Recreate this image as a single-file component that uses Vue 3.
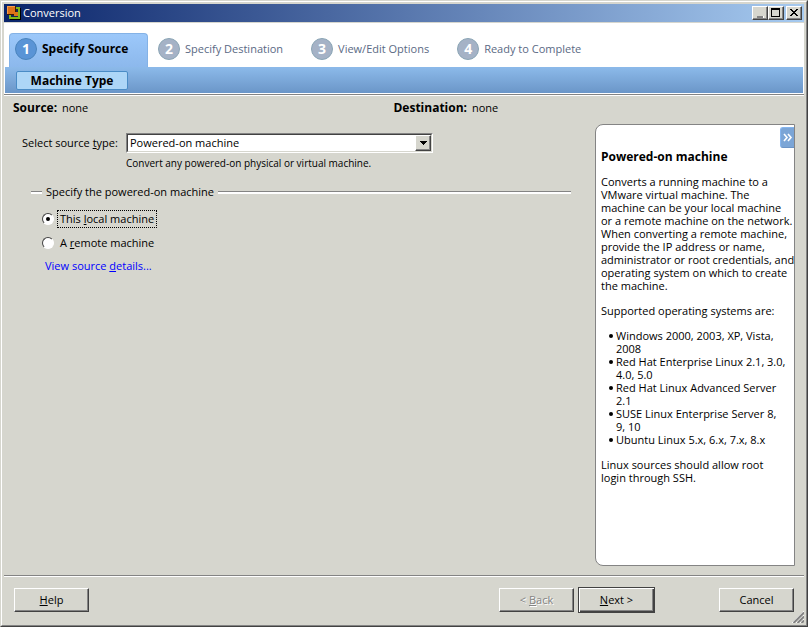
<template>
  <div class="window">
    <div class="window-inner">
      <!-- Title bar -->
      <header class="titlebar">
        <svg class="app-icon" width="16" height="16" viewBox="0 0 16 16" shape-rendering="crispEdges">
          <path d="M3 3h12v12H4v-1H3z" fill="#000" />
          <path d="M3 2h11v12H3zM5 4v8h7V4z" fill="#84b818" fill-rule="evenodd" />
          <rect x="5" y="4" width="7" height="8" fill="#182850" />
          <rect x="1" y="1" width="9" height="9" fill="#421800" />
          <rect x="1" y="1" width="8" height="8" fill="#de7318" />
          <path d="M1 1h8v1H2v7H1z" fill="#f79c4a" />
          <rect x="8" y="7" width="4" height="4" fill="#de7318" />
        </svg>
        <h1 class="title">Conversion</h1>
        <div class="window-buttons">
          <button type="button" class="win-btn" aria-label="Minimize">
            <svg width="12" height="10" viewBox="0 0 12 10" shape-rendering="crispEdges">
              <path d="M3 8h6v2H3z" fill="#848484" />
              <path d="M9 8h1v2H9z" fill="#fff" />
            </svg>
          </button>
          <button type="button" class="win-btn" aria-label="Maximize">
            <svg width="12" height="10" viewBox="0 0 12 10" shape-rendering="crispEdges">
              <path d="M1 0h9v9H1zM2 2v6h7V2z" fill="#000" fill-rule="evenodd" />
            </svg>
          </button>
          <button type="button" class="win-btn close" aria-label="Close">
            <svg width="12" height="10" viewBox="0 0 12 10" shape-rendering="crispEdges">
              <path d="M2 1h2v1h1v1h2v-1h1v-1h2v1h-1v1h-1v1h-1v1h1v1h1v1h1v1h-2v-1h-1v-1h-2v1h-1v1h-2v-1h1v-1h1v-1h1v-1h-1v-1h-1v-1h-1z" fill="#000" />
            </svg>
          </button>
        </div>
      </header>

      <!-- Wizard steps -->
      <nav class="wizard">
        <ol class="steps">
          <li
            v-for="(step, index) in steps"
            :key="step"
            :class="['step', { active: index === currentStep }]"
          >
            <span class="step-number">{{ index + 1 }}</span>
            <span class="step-label">{{ step }}</span>
          </li>
        </ol>
        <div class="substeps">
          <button type="button" class="substep">Machine Type</button>
        </div>
      </nav>

      <section class="summary">
        <div><strong>Source:</strong> none</div>
        <div><strong>Destination:</strong> none</div>
      </section>

      <main class="content">
        <form class="form" @submit.prevent>
          <div class="source-type">
            <label for="source-type">Select source <u>t</u>ype:</label>
            <div class="select-box">
              <select id="source-type" v-model="sourceType">
                <option>Powered-on machine</option>
              </select>
              <span class="select-arrow">
                <svg width="7" height="4" viewBox="0 0 7 4" shape-rendering="crispEdges">
                  <path d="M0 0h7v1H0zM1 1h5v1H1zM2 2h3v1H2zM3 3h1v1H3z" />
                </svg>
              </span>
            </div>
            <p class="hint">Convert any powered-on physical or virtual machine.</p>
          </div>

          <fieldset class="machine">
            <legend>Specify the powered-on machine</legend>
            <div class="options">
              <label class="radio">
                <input v-model="machine" type="radio" name="machine" value="local">
                <span>This <u>l</u>ocal machine</span>
              </label>
              <label class="radio">
                <input v-model="machine" type="radio" name="machine" value="remote">
                <span>A <u>r</u>emote machine</span>
              </label>
              <a href="#" class="details">View source <u>d</u>etails...</a>
            </div>
          </fieldset>
        </form>

        <aside class="help">
          <button type="button" class="collapse" aria-label="Collapse">
            <svg width="10" height="9" viewBox="0 0 10 9">
              <path d="M1 1l3 3.5L1 8M5 1l3 3.5L5 8" fill="none" stroke="#fff" stroke-width="1.6" />
            </svg>
          </button>
          <h2>Powered-on machine</h2>
          <p>
            Converts a running machine to a<br>
            VMware virtual machine. The<br>
            machine can be your local machine<br>
            or a remote machine on the network.<br>
            When converting a remote machine,<br>
            provide the IP address or name,<br>
            administrator or root credentials, and<br>
            operating system on which to create<br>
            the machine.
          </p>
          <p>Supported operating systems are:</p>
          <ul>
            <li v-for="os in systems" :key="os">{{ os }}</li>
          </ul>
          <p>
            Linux sources should allow root<br>
            login through SSH.
          </p>
        </aside>
      </main>

      <!-- Bottom buttons -->
      <footer class="footer">
        <button type="button" class="btn"><u>H</u>elp</button>
        <div class="nav-buttons">
          <button type="button" class="btn" disabled>&lt; <u>B</u>ack</button>
          <button type="button" class="btn default"><u>N</u>ext &gt;</button>
        </div>
        <button type="button" class="btn">Cancel</button>
      </footer>
      <svg class="grip" width="12" height="12" viewBox="0 0 12 12">
        <path d="M0 12L12 0M4 12l8-8M8 12l4-4" stroke="#fff" />
        <path d="M1.5 12L12 1.5M5.5 12L12 5.5M9.5 12L12 9.5" stroke="#848484" stroke-width="2" />
      </svg>
    </div>
  </div>
</template>

<script setup>
import { ref } from 'vue'

const steps = ['Specify Source', 'Specify Destination', 'View/Edit Options', 'Ready to Complete']
const currentStep = ref(0)

const sourceType = ref('Powered-on machine')
const machine = ref('local')

// \u00a0 keeps the last version numbers together
const systems = [
  'Windows 2000, 2003, XP, Vista, 2008',
  'Red Hat Enterprise Linux 2.1, 3.0, 4.0, 5.0',
  'Red Hat Linux Advanced Server 2.1',
  'SUSE Linux Enterprise Server 8, 9,\u00a010',
  'Ubuntu Linux 5.x, 6.x, 7.x, 8.x'
]
</script>

<style>
body {
  background: #d6d6ce;
}
</style>

<style scoped>
* {
  box-sizing: border-box;
}

.window {
  min-height: 100vh;
  display: flex;
  background: #d6d6ce;
  border: 1px solid #d6d6ce;
  border-right-color: #424242;
  border-bottom-color: #424242;
  font: 11px/16px 'Open Sans', 'Liberation Sans', sans-serif;
  color: #000;
}

.window-inner {
  position: relative;
  flex: 1;
  min-width: 0;
  display: flex;
  flex-direction: column;
  border: 1px solid #fff;
  border-right-color: #848484;
  border-bottom-color: #848484;
  padding: 2px;
}

button,
select {
  font: inherit;
  color: inherit;
}

/* Title bar */
.titlebar {
  display: flex;
  align-items: center;
  height: 18px;
  padding: 0 2px;
  background: linear-gradient(90deg, #0a246a, #a6caf0);
  color: #fff;
}

.title {
  flex: 1;
  margin: 0 0 0 1px;
  font-size: 11px;
  font-weight: normal;
}

.window-buttons {
  display: flex;
}

.win-btn {
  display: flex;
  align-items: center;
  justify-content: center;
  width: 16px;
  height: 14px;
  padding: 0;
  background: #d6d6ce;
  border: 1px solid #fff;
  border-right-color: #424242;
  border-bottom-color: #424242;
  box-shadow: inset -1px -1px #848484;
}

.win-btn svg {
  flex: none;
}

.close {
  margin-left: 2px;
}

/* Steps */
.wizard {
  margin-top: 1px;
  padding: 0 1px 1px;
  background: #fff;
  border-bottom: 1px solid #848484;
}

.steps {
  display: flex;
  gap: 28px;
  height: 44px;
  margin: 0;
  padding: 10px 4px 0;
  list-style: none;
}

.step {
  display: flex;
  align-items: center;
  gap: 5px;
  height: 34px;
  padding-bottom: 2px;
  color: #5a6984;
}

.step.active {
  width: 139px;
  margin-right: -18px;
  padding: 0 0 3px 5px;
  background: linear-gradient(#9cc8fa, #8cb8ec);
  border: 1px solid #84b2e6;
  border-bottom: 0;
  border-radius: 4px 4px 0 0;
  color: #000;
  font-size: 12px;
  font-weight: bold;
}

.step-number {
  display: flex;
  align-items: center;
  justify-content: center;
  width: 22px;
  height: 22px;
  border: 1px solid #8aa5b5;
  border-radius: 50%;
  background: #a5b2c6;
  color: #fff;
  font-size: 14px;
  font-weight: bold;
}

.active .step-number {
  background: #5a94d6;
  border-color: #4a84bd;
}

.substeps {
  height: 26px;
  padding: 4px 11px;
  background: linear-gradient(#8cbaea, #6b96c8);
}

.substep {
  display: block;
  width: 112px;
  height: 19px;
  padding: 0;
  background: #add6f7;
  border: 1px solid #4a8cc6;
  border-radius: 2px;
  font-size: 12px;
  font-weight: bold;
  line-height: 16px;
}

/* Source and destination summary */
.summary {
  display: grid;
  grid-template-columns: 38fr 41fr;
  padding: 4px 0 8px 9px;
  border-top: 1px solid #fff;
}

.summary strong {
  margin-right: 2px;
  font-size: 12px;
}

/* Form */
.content {
  flex: 1;
  display: flex;
  gap: 24px;
  padding: 0 9px;
}

.form {
  flex: 1;
  min-width: 0;
  padding: 9px 0 0 9px;
}

.source-type {
  display: grid;
  grid-template-columns: 104px minmax(0, 307px);
  align-items: center;
}

.select-box {
  position: relative;
  border: 1px solid #848484;
  border-right-color: #fff;
  border-bottom-color: #fff;
}

.select-box select {
  display: block;
  width: 100%;
  height: 18px;
  padding: 0 20px 0 2px;
  appearance: none;
  background: #fff;
  border: 1px solid #424242;
  border-right-color: #d6d6ce;
  border-bottom-color: #d6d6ce;
  border-radius: 0;
}

.select-arrow {
  position: absolute;
  top: 1px;
  right: 1px;
  bottom: 1px;
  width: 16px;
  display: flex;
  align-items: center;
  justify-content: center;
  background: #d6d6ce;
  border: 1px solid #fff;
  border-right-color: #424242;
  border-bottom-color: #424242;
  box-shadow: inset -1px -1px #848484;
  pointer-events: none;
}

.hint {
  grid-column: 2;
  margin: 3px 0 0;
  font-size: 10px;
  line-height: 14px;
}

.machine {
  min-width: 0;
  margin: 14px 0 0 9px;
  padding: 0;
  border: 0;
}

.machine legend {
  display: flex;
  align-items: center;
  gap: 4px;
  width: 100%;
  padding: 0;
}

.machine legend::before,
.machine legend::after {
  content: '';
  width: 11px;
  height: 2px;
  background: #fff;
  border-top: 1px solid #848484;
}

.machine legend::after {
  flex: 1;
}

.options {
  display: flex;
  flex-direction: column;
  align-items: flex-start;
  gap: 6px;
  padding: 10px 0 0 11px;
}

.radio {
  display: flex;
  align-items: center;
  gap: 3px;
}

.radio input {
  display: flex;
  align-items: center;
  justify-content: center;
  width: 12px;
  height: 12px;
  margin: 0;
  appearance: none;
  background: #fff;
  border: 1px solid #424242;
  border-right-color: #fff;
  border-bottom-color: #fff;
  border-radius: 50%;
}

.radio input:checked::before {
  content: '';
  width: 4px;
  height: 4px;
  border-radius: 50%;
  background: #000;
}

.radio span {
  padding: 0 2px;
  border: 1px dotted transparent;
}

.radio input:checked + span {
  border-color: #000;
}

.details {
  margin-left: 3px;
  color: #00f;
  text-decoration: none;
}

/* Help panel */
.help {
  position: relative;
  flex: 0 0 200px;
  min-width: 0;
  padding: 25px 0 12px 5px;
  background: #fff;
  border: 1px solid #848484;
  border-radius: 8px 0 0 8px;
  line-height: 13px;
  white-space: nowrap;
}

.help h2 {
  margin: 0 0 12px;
  font-size: 12px;
}

.help p {
  margin: 0 0 12px;
}

.help ul {
  margin: 0 0 12px;
  padding: 0 4px 0 15px;
  list-style: none;
  white-space: normal;
}

.help li::before {
  content: '';
  float: left;
  width: 4px;
  height: 4px;
  margin: 5px 0 0 -7px;
  border-radius: 50%;
  background: #000;
}

.collapse {
  position: absolute;
  top: 2px;
  right: 0;
  display: flex;
  align-items: center;
  justify-content: center;
  width: 14px;
  height: 21px;
  padding: 0;
  background: #7ba5d6;
  border: 1px solid #84b5ef;
  border-right: 0;
  border-bottom-color: #6b94c6;
  border-radius: 3px 0 0 3px;
}

/* Footer */
.footer {
  display: flex;
  align-items: center;
  margin-top: 9px;
  padding: 11px 10px 10px;
  border-top: 1px solid #848484;
  box-shadow: inset 0 1px #fff;
}

.nav-buttons {
  display: flex;
  align-items: center;
  gap: 4px;
  margin: 0 64px 0 auto;
}

.btn {
  width: 75px;
  height: 24px;
  padding: 0;
  background: #d6d6ce;
  border: 1px solid #fff;
  border-right-color: #424242;
  border-bottom-color: #424242;
  box-shadow: inset -1px -1px #848484;
}

.btn.default {
  width: 77px;
  height: 26px;
  border-color: #424242;
  box-shadow: inset 1px 1px #fff, inset -1px -1px #424242, inset -2px -2px #848484;
}

.btn:disabled {
  color: #848484;
  text-shadow: 1px 1px #fff;
}

.grip {
  position: absolute;
  right: 2px;
  bottom: 2px;
}
</style>
